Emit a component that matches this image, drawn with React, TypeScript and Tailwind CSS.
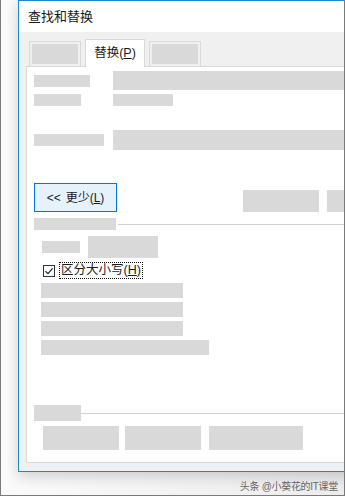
export default function App() {
  const font = { fontFamily: '"Liberation Sans", "Noto Sans CJK SC", sans-serif' };
  return (
    <div
      className="relative h-[496px] w-[345px] overflow-hidden border-x border-b border-[#7a7a7a] bg-gradient-to-r from-[#fbfbfb] to-[#ececec]"
      style={font}
    >
      {/* dialog window */}
      <div className="ml-[17px] flex h-[472px] w-[400px] flex-col border border-[#1c88cf] bg-[#f0f0f0] shadow-[0_4px_14px_rgba(0,0,0,0.18)]">
        <div className="flex h-[31px] items-center bg-white pl-[9px] text-[13px] text-[#1a1a1a]">查找和替换</div>

        <div className="flex flex-1 flex-col px-[7px] pb-[8px]">
          {/* tabs */}
          <div className="mt-[7px] flex h-[27px] items-end gap-[4px] pl-[3px]">
            <div className="h-[25px] w-[52px] border border-b-0 border-[#dadada] p-[2px]">
              <div className="h-full bg-[#d9d9d9]" />
            </div>
            <div className="relative z-10 -mb-px flex h-[28px] w-[60px] items-center justify-center border border-b-0 border-[#d9d9d9] bg-white text-[12.5px] text-[#1a1a1a]">
              替换(<span className="underline">P</span>)
            </div>
            <div className="h-[25px] w-[52px] border border-b-0 border-[#dadada] p-[2px]">
              <div className="h-full bg-[#d9d9d9]" />
            </div>
          </div>

          {/* panel */}
          <div className="flex flex-1 flex-col border border-[#d9d9d9] bg-white pl-[7px]">
            <div className="mt-[4px] flex items-center">
              <div className="h-[12px] w-[56px] bg-[#d9d9d9]" />
              <div className="ml-[23px] h-[19px] flex-1 bg-[#d9d9d9]" />
            </div>
            <div className="mt-[4px] flex items-center">
              <div className="h-[12px] w-[47px] bg-[#d9d9d9]" />
              <div className="ml-[32px] h-[12px] w-[60px] bg-[#d9d9d9]" />
            </div>
            <div className="mt-[24px] flex items-center">
              <div className="h-[12px] w-[70px] bg-[#d9d9d9]" />
              <div className="ml-[9px] h-[20px] flex-1 bg-[#d9d9d9]" />
            </div>

            <div className="mt-[33px] flex items-end">
              <div className="flex h-[29px] w-[83px] items-center justify-center gap-[5px] border border-[#0078d7] bg-[#e5f1fb] text-[12px] text-[#1a1a1a]">
                <span>&lt;&lt;</span>
                <span>
                  更少(<span className="underline">L</span>)
                </span>
              </div>
              <div className="ml-[126px] h-[22px] w-[76px] bg-[#d9d9d9]" />
              <div className="ml-[8px] h-[22px] w-[76px] bg-[#d9d9d9]" />
            </div>

            <div className="mt-[6px] flex items-center">
              <div className="h-[12px] w-[82px] bg-[#d9d9d9]" />
              <div className="ml-[2px] h-px flex-1 bg-[#d0d0d0]" />
            </div>

            <div className="ml-[8px] mt-[6px] flex items-center">
              <div className="h-[12px] w-[38px] bg-[#d9d9d9]" />
              <div className="ml-[8px] h-[22px] w-[70px] bg-[#d9d9d9]" />
            </div>

            <div className="ml-[9px] mt-[4px] flex h-[17px] items-center">
              <div className="flex h-[12px] w-[12px] items-center justify-center border border-[#333] bg-white">
                <svg width="10" height="10" viewBox="0 0 10 10">
                  <path d="M1.5 5.2 L4 7.6 L8.6 2.4" fill="none" stroke="#222" strokeWidth="1.2" />
                </svg>
              </div>
              <div className="ml-[4px] flex h-[17px] items-center border border-dotted border-[#111] px-[1px] text-[12.5px] text-[#1a1a1a]">
                区分大小写(<span className="underline">H</span>)
              </div>
            </div>

            <div className="ml-[7px] mt-[4px] flex flex-col gap-[4px]">
              <div className="h-[15px] w-[142px] bg-[#d9d9d9]" />
              <div className="h-[15px] w-[142px] bg-[#d9d9d9]" />
              <div className="h-[15px] w-[142px] bg-[#d9d9d9]" />
              <div className="h-[15px] w-[168px] bg-[#d9d9d9]" />
            </div>

            <div className="mt-[50px] flex items-center">
              <div className="h-[16px] w-[47px] bg-[#d9d9d9]" />
              <div className="h-px flex-1 bg-[#d0d0d0]" />
            </div>

            <div className="ml-[9px] mt-[5px] flex">
              <div className="h-[24px] w-[76px] bg-[#d9d9d9]" />
              <div className="ml-[6px] h-[24px] w-[76px] bg-[#d9d9d9]" />
              <div className="ml-[8px] h-[24px] w-[94px] bg-[#d9d9d9]" />
            </div>
          </div>
        </div>
      </div>

      <div className="mt-[7px] pr-[6px] text-right text-[10px] tracking-[-0.3px] text-[#666]">头条 @小葵花的IT课堂</div>
    </div>
  );
}
